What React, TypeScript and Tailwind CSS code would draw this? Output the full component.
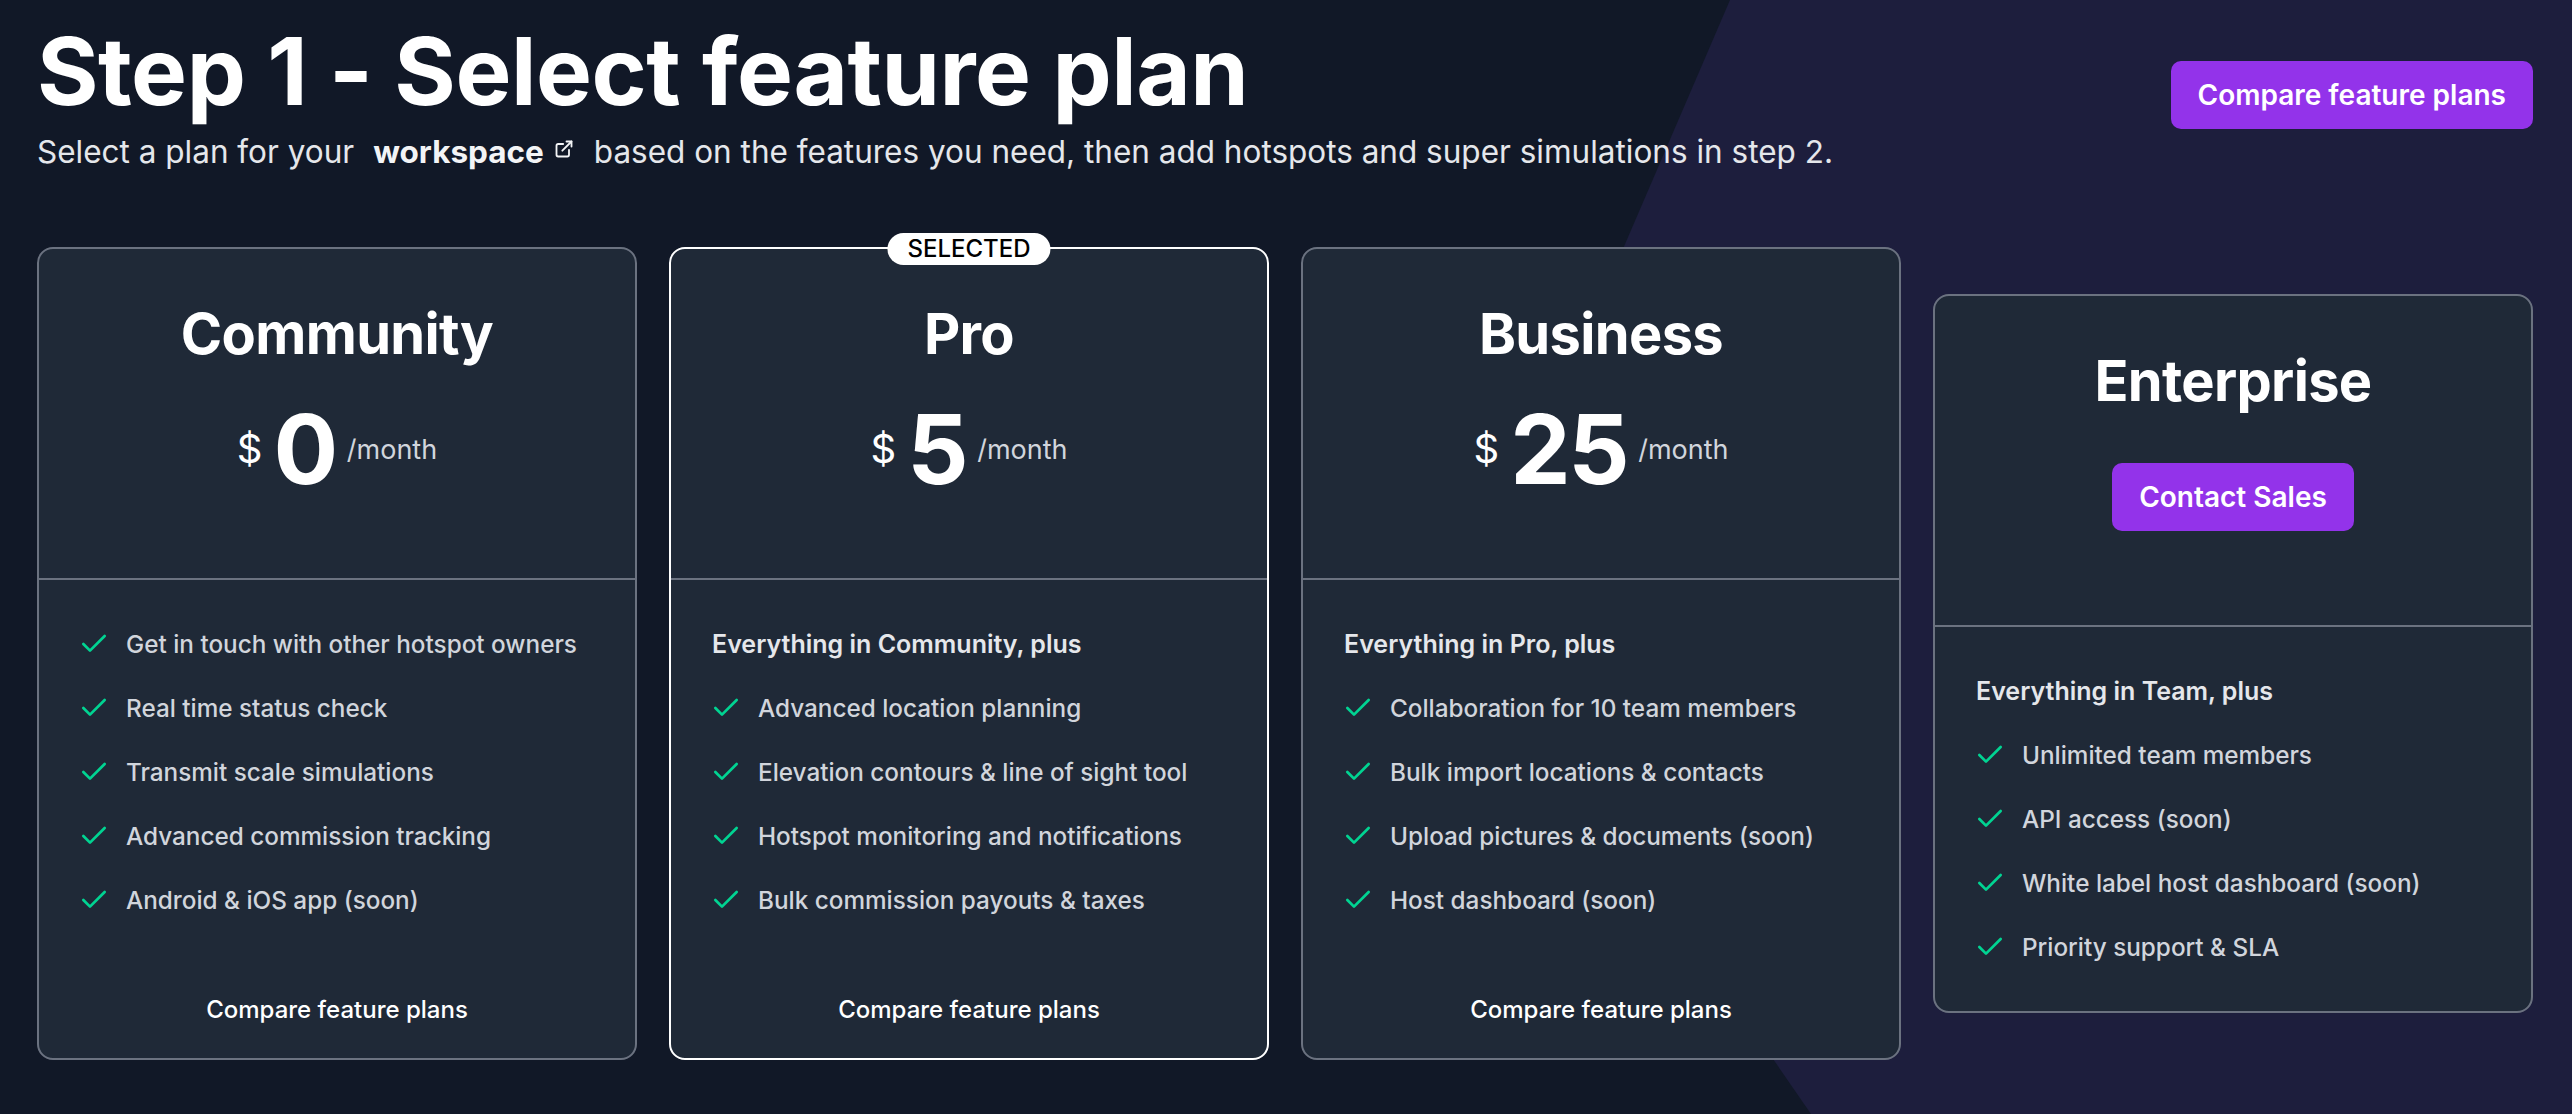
import { Check, ExternalLink } from "lucide-react"

type Plan = {
  name: string
  price?: string
  intro?: string
  features: string[]
  selected?: boolean
  enterprise?: boolean
}

const plans: Plan[] = [
  {
    name: "Community",
    price: "0",
    features: [
      "Get in touch with other hotspot owners",
      "Real time status check",
      "Transmit scale simulations",
      "Advanced commission tracking",
      "Android & iOS app (soon)",
    ],
  },
  {
    name: "Pro",
    price: "5",
    intro: "Everything in Community, plus",
    selected: true,
    features: [
      "Advanced location planning",
      "Elevation contours & line of sight tool",
      "Hotspot monitoring and notifications",
      "Bulk commission payouts & taxes",
    ],
  },
  {
    name: "Business",
    price: "25",
    intro: "Everything in Pro, plus",
    features: [
      "Collaboration for 10 team members",
      "Bulk import locations & contacts",
      "Upload pictures & documents (soon)",
      "Host dashboard (soon)",
    ],
  },
  {
    name: "Enterprise",
    intro: "Everything in Team, plus",
    enterprise: true,
    features: [
      "Unlimited team members",
      "API access (soon)",
      "White label host dashboard (soon)",
      "Priority support & SLA",
    ],
  },
]

function PlanCard({ plan }: { plan: Plan }) {
  return (
    <div
      className={`relative flex flex-col rounded-[16px] border-2 bg-[#1f2937] ${
        plan.selected ? "border-white" : "border-[#6b7280]"
      }`}
    >
      {plan.selected && (
        <span className="absolute left-1/2 top-0 flex h-[32px] -translate-x-1/2 -translate-y-[16px] items-center rounded-full bg-white px-[20px] text-[24px] font-medium leading-none text-black">
          SELECTED
        </span>
      )}

      {/* Header: name + price or sales button */}
      <div className="flex h-[331px] flex-col items-center border-b-2 border-[#6b7280] pt-[57px]">
        <h2 className="text-[56px] font-bold leading-none tracking-[-0.012em] text-white">{plan.name}</h2>
        {plan.enterprise ? (
          <button className="mt-[54px] h-[68px] rounded-[10px] bg-[#9333ea] px-[27px] text-[28px] font-semibold text-white">
            Contact Sales
          </button>
        ) : (
          <div className="mt-[39px] flex items-center gap-[11px]">
            <span className="text-[40px] leading-none text-white">$</span>
            <span className="text-[96px] font-bold leading-none tracking-tight text-white">{plan.price}</span>
            <span className="text-[27px] leading-none text-gray-300">/month</span>
          </div>
        )}
      </div>

      {/* Feature list */}
      <ul className="flex flex-col gap-[24px] px-[39px] py-[44px]">
        {plan.intro && (
          <li className="pl-[2px] text-[25px] font-semibold leading-[40px] text-gray-200">{plan.intro}</li>
        )}
        {plan.features.map((f) => (
          <li key={f} className="flex items-center gap-[16px]">
            <Check size={32} strokeWidth={2} className="shrink-0 text-emerald-400" />
            <span className="text-[24.3px] font-medium leading-[40px] text-gray-300">{f}</span>
          </li>
        ))}
      </ul>

      {!plan.enterprise && (
        <div className="pb-[28px] pt-[26px] text-center text-[24px] font-medium leading-[40px] text-white">
          Compare feature plans
        </div>
      )}
    </div>
  )
}

export default function App() {
  return (
    <div className="relative min-h-screen w-full overflow-hidden bg-[#111827] font-['Inter',sans-serif]">
      {/* background shape */}
      <div className="absolute inset-0 bg-[#1d1e3d] [clip-path:polygon(1730px_0,100%_0,100%_100%,1811px_100%,1466px_614px)]" />

      <div className="relative pl-[37px] pr-[39px]">
        <div className="flex items-start justify-between pt-[24px]">
          <div>
            <h1 className="text-[94px] font-bold leading-none tracking-[-0.005em] text-white">
              Step 1 - Select feature plan
            </h1>
            <p className="mt-[11px] text-[31.5px] leading-[45px] text-gray-200">
              Select a plan for your
              <span className="ml-[19px] inline-flex items-center gap-[10px] font-bold text-gray-100">
                workspace
                <ExternalLink size={20} strokeWidth={2.2} className="-mt-[6px]" />
              </span>
              <span className="ml-[20px]">
                based on the features you need, then add hotspots and super simulations in step 2.
              </span>
            </p>
          </div>
          <button className="mt-[37px] h-[68px] rounded-[10px] bg-[#9333ea] px-[27px] text-[28px] font-semibold text-white">
            Compare feature plans
          </button>
        </div>

        <div className="mt-[73px] grid grid-cols-4 items-center gap-[32px]">
          {plans.map((p) => (
            <PlanCard key={p.name} plan={p} />
          ))}
        </div>
      </div>
    </div>
  )
}
